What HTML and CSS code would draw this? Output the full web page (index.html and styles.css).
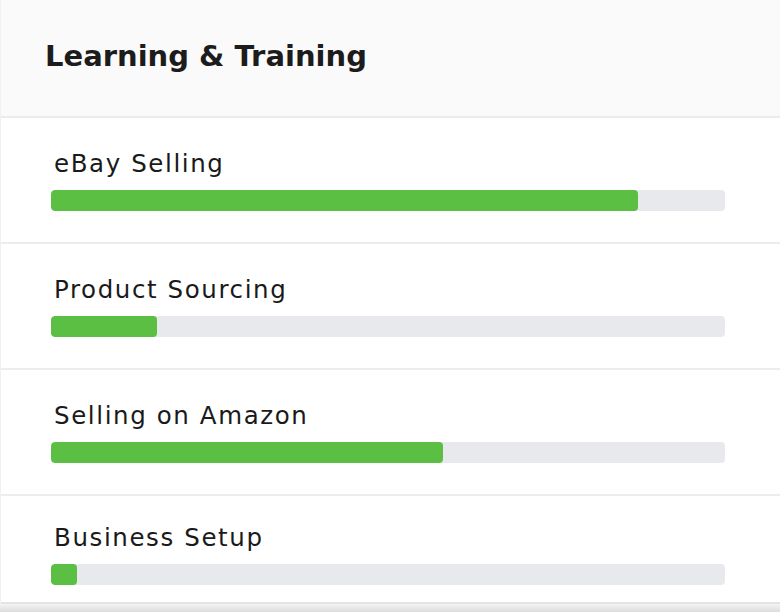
FILE: index.html
```html
<!DOCTYPE html>
<html>
<head>
<meta charset="utf-8">
<link rel="stylesheet" href="styles.css">
</head>
<body>
<div class="card">
  <div class="card-header"><h1 class="title">Learning &amp; Training</h1></div>
  <div class="row">
    <div class="label">eBay Selling</div>
    <div class="track"><div class="fill" style="width:87.1%"></div></div>
  </div>
  <div class="row">
    <div class="label">Product Sourcing</div>
    <div class="track"><div class="fill" style="width:15.7%"></div></div>
  </div>
  <div class="row">
    <div class="label">Selling on Amazon</div>
    <div class="track"><div class="fill" style="width:58.2%"></div></div>
  </div>
  <div class="row last">
    <div class="label">Business Setup</div>
    <div class="track"><div class="fill" style="width:3.9%"></div></div>
  </div>
</div>
<div class="shadow"></div>
</body>
</html>
```

FILE: styles.css
```css
html, body {
  margin: 0;
  padding: 0;
  background: #ffffff;
}
body {
  width: 780px;
  height: 612px;
  overflow: hidden;
  font-family: "DejaVu Sans", "Noto Sans", sans-serif;
  color: #161616;
}
.card {
  background: #ffffff;
  border-left: 1px solid #f0f0f2;
}
.card-header {
  background: #fafafb;
  border-bottom: 2px solid #ebebed;
  display: flex;
  align-items: center;
  padding-left: 44px;
  box-sizing: border-box;
  height: 118px;
}
.title {
  margin: 0;
  font-size: 29px;
  font-weight: 700;
  letter-spacing: 0;
  color: #1c1c1c;
  padding-bottom: 4px;
}
.row {
  height: 126px;
  box-sizing: border-box;
  border-bottom: 2px solid #ededef;
  padding: 31px 55px 0 50px;
}
.row.last {
  height: 108px;
  border-bottom: 2px solid #e3e3e5;
  padding-top: 27px;
}
.label {
  font-size: 24.5px;
  font-weight: 400;
  line-height: 30px;
  padding-left: 3px;
  letter-spacing: 1.6px;
  color: #1a1a1a;
}
.track {
  margin-top: 11px;
  height: 21px;
  background: #e8e9ec;
  border-radius: 4px;
  overflow: hidden;
}
.fill {
  height: 100%;
  background: #5abf43;
  border-radius: 4px;
}
.shadow {
  height: 8px;
  background: linear-gradient(#f4f4f4, #dcdcdc);
}
```
